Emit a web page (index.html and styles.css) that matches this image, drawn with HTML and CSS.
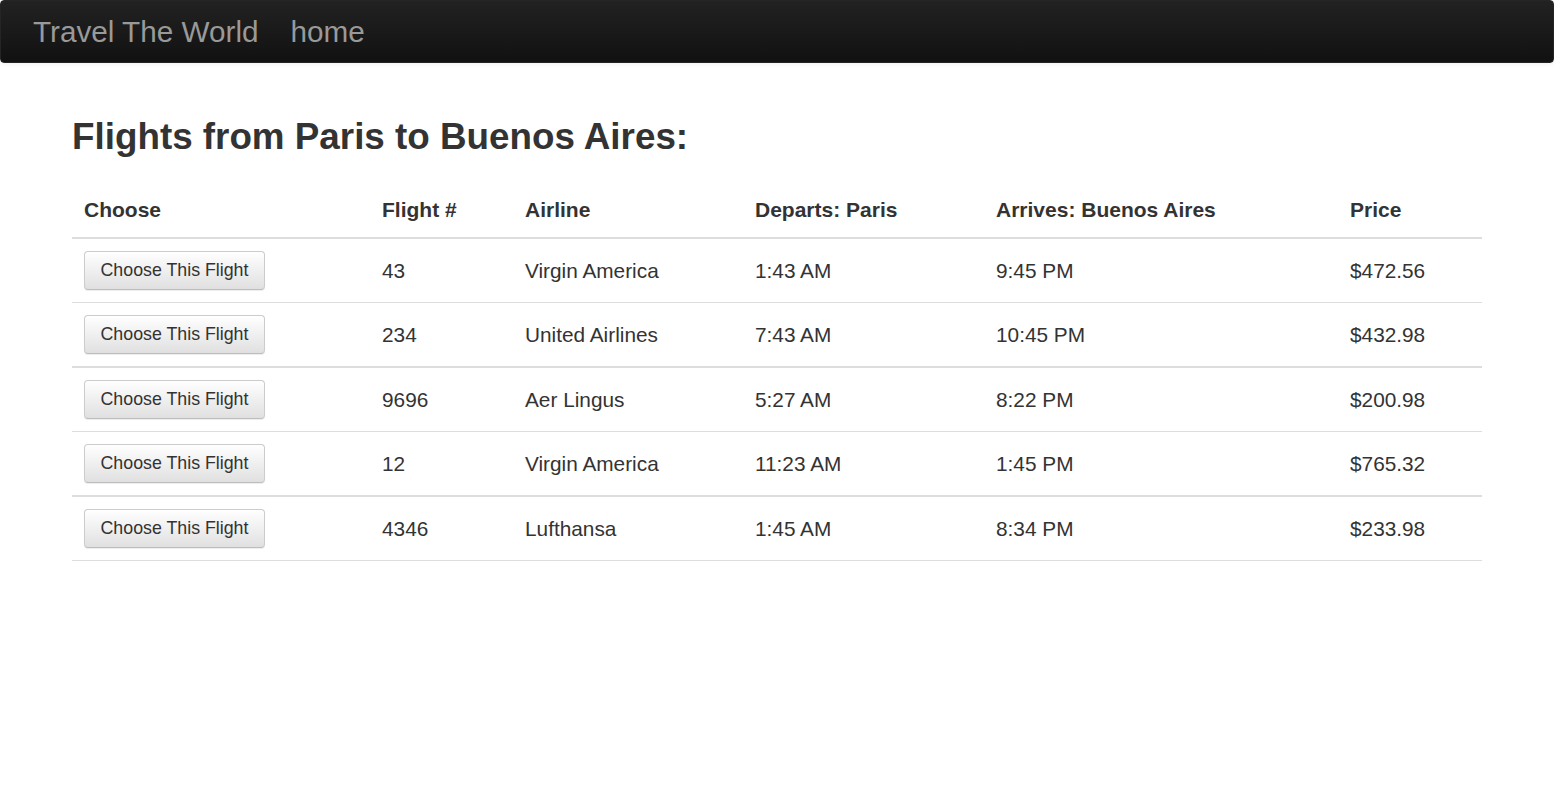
FILE: index.html
```html
<!DOCTYPE html>
<html lang="en">
<head>
<meta charset="utf-8">
<title>Travel The World</title>
<link rel="stylesheet" href="styles.css">
</head>
<body>
<nav class="navbar">
  <a class="brand" href="#">Travel The World</a>
  <a class="nav-link" href="#">home</a>
</nav>
<main class="container">
  <h1 class="title">Flights from Paris to Buenos Aires:</h1>
  <table class="flights">
    <colgroup>
      <col class="c-choose"><col class="c-num"><col class="c-airline"><col class="c-dep"><col class="c-arr"><col class="c-price">
    </colgroup>
    <thead>
      <tr><th>Choose</th><th>Flight #</th><th>Airline</th><th>Departs: Paris</th><th>Arrives: Buenos Aires</th><th>Price</th></tr>
    </thead>
    <tbody>
      <tr><td><button class="btn">Choose This Flight</button></td><td>43</td><td>Virgin America</td><td>1:43 AM</td><td>9:45 PM</td><td>$472.56</td></tr>
      <tr><td><button class="btn">Choose This Flight</button></td><td>234</td><td>United Airlines</td><td>7:43 AM</td><td>10:45 PM</td><td>$432.98</td></tr>
    </tbody>
    <tbody>
      <tr><td><button class="btn">Choose This Flight</button></td><td>9696</td><td>Aer Lingus</td><td>5:27 AM</td><td>8:22 PM</td><td>$200.98</td></tr>
      <tr><td><button class="btn">Choose This Flight</button></td><td>12</td><td>Virgin America</td><td>11:23 AM</td><td>1:45 PM</td><td>$765.32</td></tr>
    </tbody>
    <tbody>
      <tr><td><button class="btn">Choose This Flight</button></td><td>4346</td><td>Lufthansa</td><td>1:45 AM</td><td>8:34 PM</td><td>$233.98</td></tr>
    </tbody>
  </table>
</main>
</body>
</html>
```
FILE: styles.css
```css
html, body {
  margin: 0;
  padding: 0;
  background: #fff;
}
body {
  font-family: "Liberation Sans", Arial, Helvetica, sans-serif;
  color: #333;
  font-size: 20.8px;
  line-height: 29px;
}

.navbar {
  height: 63px;
  box-sizing: border-box;
  display: flex;
  align-items: center;
  padding: 1px 0 0 32px;
  background: linear-gradient(to bottom, #222222 0%, #111111 100%);
  border: 1px solid #252525;
  border-radius: 4px;
  box-shadow: 0 1px 4px rgba(0, 0, 0, 0.065);
}
.brand,
.nav-link {
  color: #999;
  text-decoration: none;
  font-size: 29.7px;
  line-height: 34px;
}
.brand {
  margin-right: 32px;
}

.container {
  padding: 0 72px;
}

.title {
  margin: 54px 0 27px;
  font-size: 36.8px;
  line-height: 39.6px;
  font-weight: bold;
  color: #333;
}

.flights {
  width: 100%;
  table-layout: fixed;
  border-collapse: separate;
  border-spacing: 0;
}
.c-choose { width: 298px; }
.c-num { width: 143px; }
.c-airline { width: 230px; }
.c-dep { width: 241px; }
.c-arr { width: 354px; }
.c-price { width: 144px; }

.flights th {
  text-align: left;
  font-weight: bold;
  font-size: 21px;
  padding: 11px 12px 13px;
  vertical-align: bottom;
  border-bottom: 2px solid #ddd;
  white-space: nowrap;
}
.flights td {
  padding: 12px;
  vertical-align: middle;
  border-top: 1px solid #ddd;
  white-space: nowrap;
}
.flights tbody:first-of-type tr:first-child td {
  border-top: none;
}
.flights tbody + tbody tr:first-child td {
  border-top-width: 2px;
}
.flights tbody:last-child tr:last-child td {
  border-bottom: 1px solid #ddd;
}

.btn {
  display: block;
  width: 181px;
  height: 39px;
  box-sizing: border-box;
  padding: 0;
  margin: 0;
  font-family: "Liberation Sans", Arial, Helvetica, sans-serif;
  font-size: 17.8px;
  line-height: 37px;
  color: #333;
  text-align: center;
  background: linear-gradient(to bottom, #ffffff 0%, #e0e0e0 100%);
  border: 1px solid #ccc;
  border-bottom-color: #bdbdbd;
  border-radius: 4px;
  box-shadow: inset 0 1px 0 rgba(255, 255, 255, 0.15), 0 1px 1px rgba(0, 0, 0, 0.075);
  cursor: pointer;
}
```
